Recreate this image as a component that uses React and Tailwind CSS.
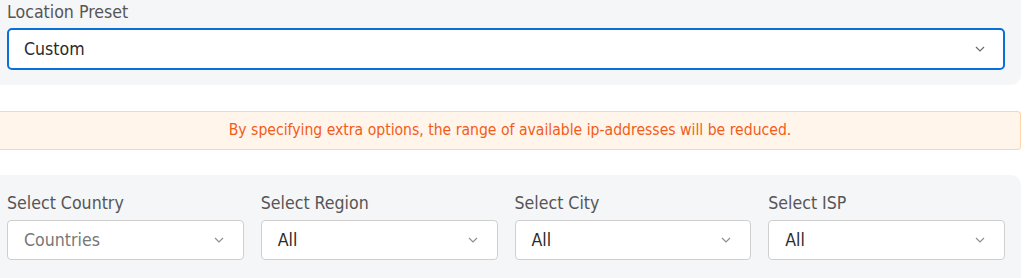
import React from "react";

const Chevron = ({ dark = false }) => (
  <svg width="10" height="6" viewBox="0 0 10 6" className="shrink-0">
    <path
      d="M1 1 L5 5 L9 1"
      fill="none"
      stroke={dark ? "#6b6b6b" : "#8f8f8f"}
      strokeWidth="1.2"
    />
  </svg>
);

const SelectBox = ({ value, placeholder = false, active = false }) => (
  <div
    className={
      active
        ? "flex items-center justify-between h-[42px] pl-[15px] pr-[18px] bg-white border-2 border-[#0a6fdc] rounded-[5px]"
        : "flex items-center justify-between h-[40px] pl-[16px] pr-[19px] bg-white border border-[#cfcfcf] rounded-[4px]"
    }
  >
    <span
      className={
        placeholder
          ? "text-[#777] text-[17.6px] leading-[20px]"
          : "text-[#2b2b2b] text-[17.6px] leading-[20px]"
      }
    >
      {value}
    </span>
    <Chevron dark={active} />
  </div>
);

const Field = ({ label, value, placeholder }) => (
  <div className="flex flex-col">
    <span className="text-[17.6px] text-[#555] leading-[20px] mb-[7px]">{label}</span>
    <SelectBox value={value} placeholder={placeholder} />
  </div>
);

export default function App() {
  return (
    <div className="w-[1026px] h-[278px] bg-white overflow-hidden font-['DejaVu_Sans_Condensed','DejaVu_Sans',sans-serif]">
      <div className="w-[1021px] h-[85px] bg-[#f5f6f8] rounded-br-[10px] px-[7px] pt-[2px]">
        <div className="text-[17.6px] text-[#555] leading-[20px] mb-[6px]">Location Preset</div>
        <div className="w-[998px]">
          <SelectBox value="Custom" active />
        </div>
      </div>
      <div className="mt-[26px] w-[1021px] h-[39px] bg-[#fff5eb] border border-l-0 border-[#ffd4a8] rounded-r-[4px] flex items-center justify-center">
        <span className="text-[15.6px] text-[#f25c19]">
          By specifying extra options, the range of available ip-addresses will be reduced.
        </span>
      </div>
      <div className="mt-[25px] w-[1021px] h-[110px] bg-[#f5f6f8] rounded-tr-[10px] pl-[7px] pr-[16px] pt-[18px]">
        <div className="grid grid-cols-4 gap-x-[17px]">
          <Field label="Select Country" value="Countries" placeholder />
          <Field label="Select Region" value="All" />
          <Field label="Select City" value="All" />
          <Field label="Select ISP" value="All" />
        </div>
      </div>
    </div>
  );
}
